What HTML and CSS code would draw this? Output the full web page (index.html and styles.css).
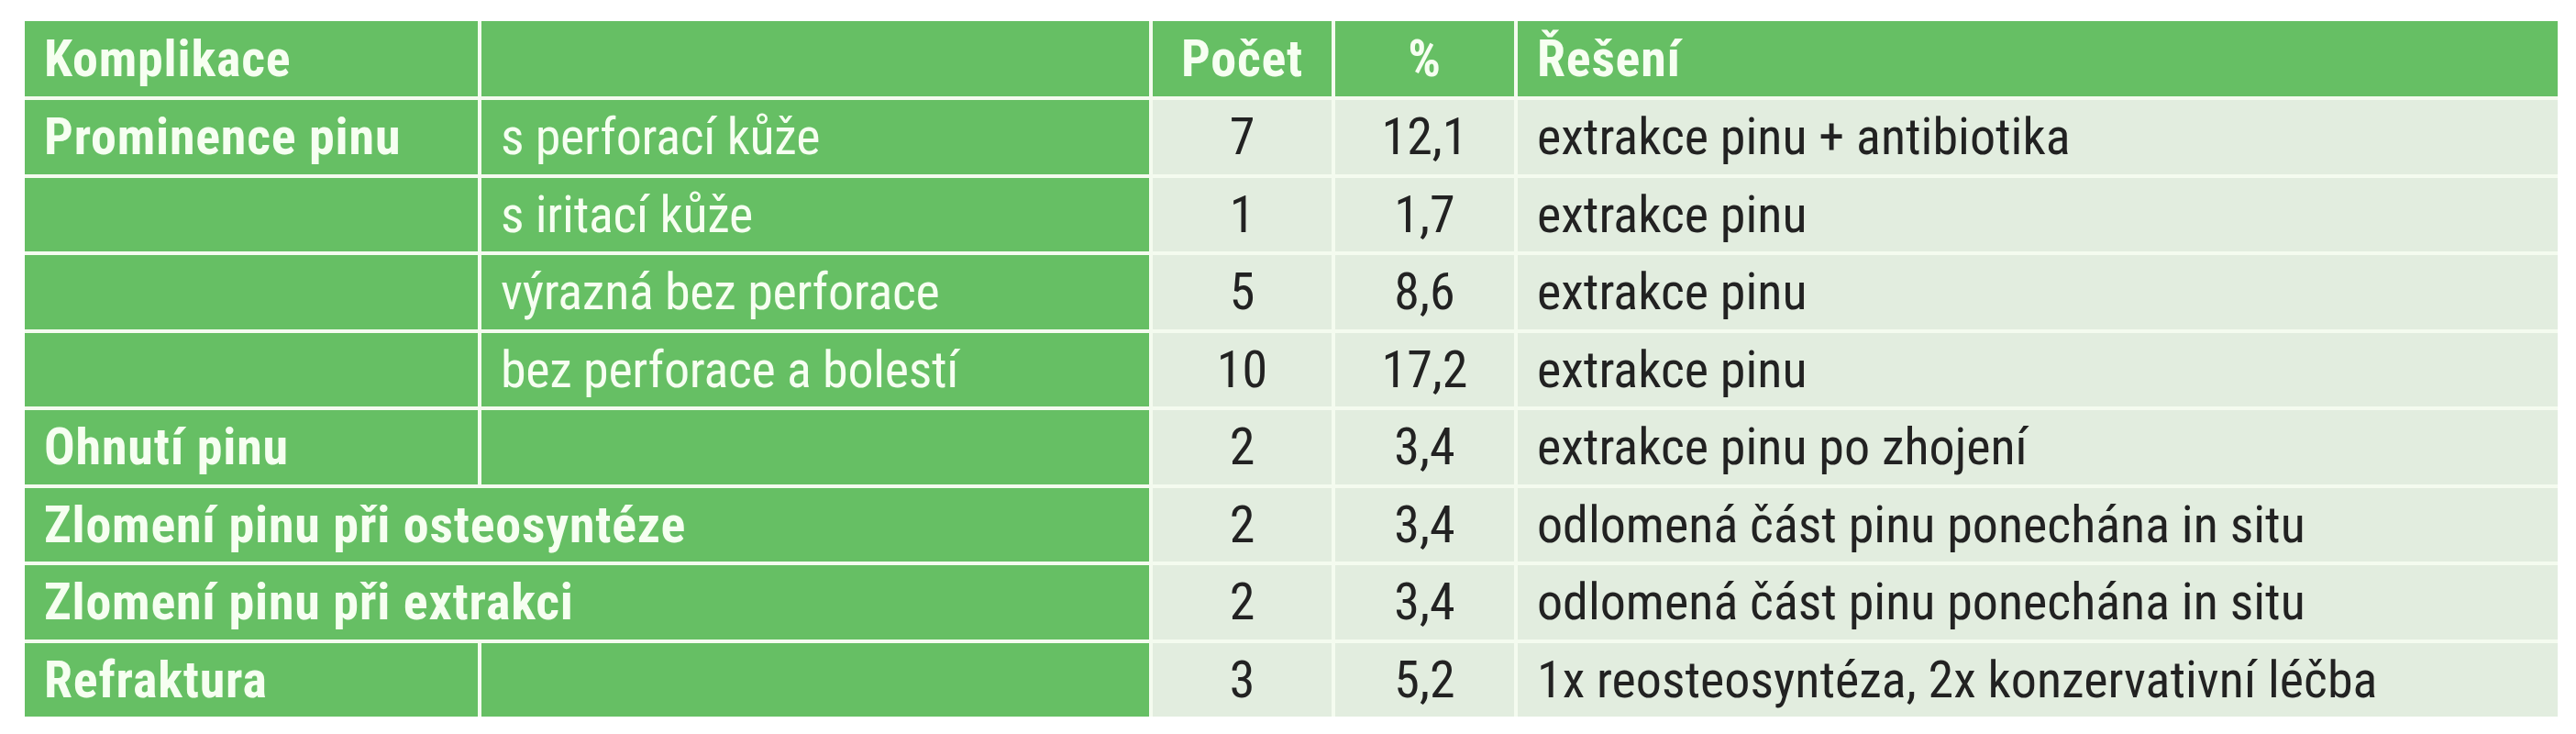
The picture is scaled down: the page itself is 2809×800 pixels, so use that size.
FILE: index.html
```html
<!DOCTYPE html>
<html lang="cs">
<head>
<meta charset="utf-8">
<title>Komplikace</title>
<link rel="stylesheet" href="styles.css">
</head>
<body>
<div class="page">
  <div class="table">
    <div class="cell head">Komplikace</div>
    <div class="cell head"></div>
    <div class="cell head num">Počet</div>
    <div class="cell head num">%</div>
    <div class="cell head">Řešení</div>

    <div class="cell label">Prominence pinu</div>
    <div class="cell sub">s perforací kůže</div>
    <div class="cell data num">7</div>
    <div class="cell data num">12,1</div>
    <div class="cell data">extrakce pinu + antibiotika</div>

    <div class="cell label"></div>
    <div class="cell sub">s iritací kůže</div>
    <div class="cell data num">1</div>
    <div class="cell data num">1,7</div>
    <div class="cell data">extrakce pinu</div>

    <div class="cell label"></div>
    <div class="cell sub">výrazná bez perforace</div>
    <div class="cell data num">5</div>
    <div class="cell data num">8,6</div>
    <div class="cell data">extrakce pinu</div>

    <div class="cell label"></div>
    <div class="cell sub">bez perforace a bolestí</div>
    <div class="cell data num">10</div>
    <div class="cell data num">17,2</div>
    <div class="cell data">extrakce pinu</div>

    <div class="cell label">Ohnutí pinu</div>
    <div class="cell sub"></div>
    <div class="cell data num">2</div>
    <div class="cell data num">3,4</div>
    <div class="cell data">extrakce pinu po zhojení</div>

    <div class="cell label wide">Zlomení pinu při osteosyntéze</div>
    <div class="cell data num">2</div>
    <div class="cell data num">3,4</div>
    <div class="cell data">odlomená část pinu ponechána in situ</div>

    <div class="cell label wide">Zlomení pinu při extrakci</div>
    <div class="cell data num">2</div>
    <div class="cell data num">3,4</div>
    <div class="cell data">odlomená část pinu ponechána in situ</div>

    <div class="cell label">Refraktura</div>
    <div class="cell sub"></div>
    <div class="cell data num">3</div>
    <div class="cell data num">5,2</div>
    <div class="cell data">1x reosteosyntéza, 2x konzervativní léčba</div>
  </div>
</div>
</body>
</html>
```
FILE: styles.css
```css
html, body {
  margin: 0;
  padding: 0;
  background: #ffffff;
}

.page {
  padding: 23px 0 0 27px;
}

.table {
  display: grid;
  grid-template-columns: 494px 728px 195px 195px 1134px;
  grid-template-rows: 82px repeat(8, 80.5px);
  gap: 4px;
  width: 2762px;
  background: #f4fbef;
  font-family: "Roboto Condensed", "DejaVu Sans Condensed", "Liberation Sans", sans-serif;
  font-size: 56px;
}

.cell {
  display: flex;
  align-items: center;
  padding: 0 21px;
  line-height: 1;
  white-space: nowrap;
  overflow: hidden;
}

.head {
  background: #66bf64;
  color: #f6fff1;
  font-weight: bold;
  letter-spacing: 0.8px;
}

.label {
  background: #66bf64;
  color: #f6fff1;
  font-weight: bold;
  letter-spacing: 0.8px;
}

.sub {
  background: #66bf64;
  color: #f6fff1;
  letter-spacing: -0.3px;
}

.data {
  background: #e2eddf;
  color: #222222;
}

.num {
  justify-content: center;
}

.wide {
  grid-column: span 2;
}
```
